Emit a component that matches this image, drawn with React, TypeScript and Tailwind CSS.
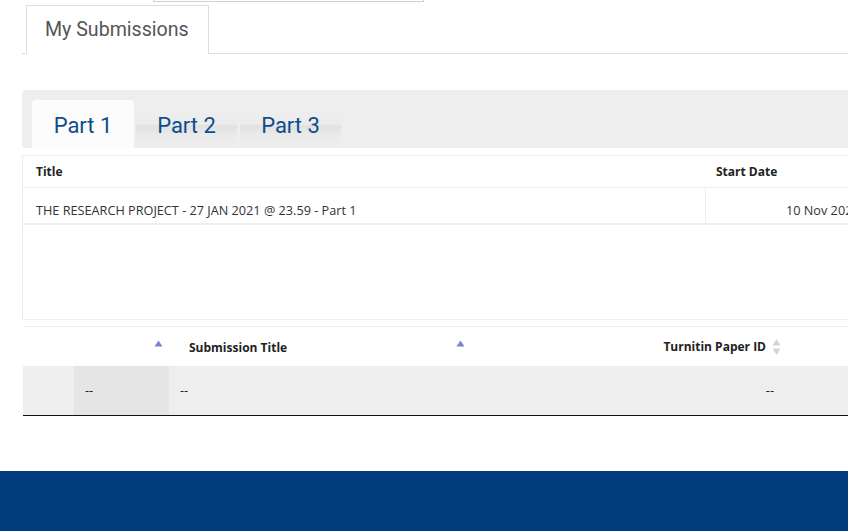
import React from "react";

function SortUp() {
  return (
    <svg width="9" height="7" viewBox="0 0 9 7" className="block">
      <path d="M4.5 0.5 L8.5 6.5 L0.5 6.5 Z" fill="#7b83d6" />
    </svg>
  );
}

function SortBoth() {
  return (
    <svg width="9" height="18" viewBox="0 0 9 18" className="block">
      <path d="M4.5 1 L8.5 7.5 L0.5 7.5 Z" fill="#d4d4d4" />
      <path d="M4.5 17 L8.5 10.5 L0.5 10.5 Z" fill="#d4d4d4" />
    </svg>
  );
}

const partTab =
  "w-[101px] h-[48px] flex items-center justify-center pt-[2px] text-[22px] text-[#0d4d8c] bg-[linear-gradient(to_bottom,#efefef_0%,#ececec_50%,#e1e1e1_54%,#e9e9e9_70%,#eeeeee_100%)] rounded-t-[4px]";

export default function App() {
  return (
    <div className="w-[848px] h-[531px] overflow-hidden bg-white flex flex-col font-['Open_Sans',sans-serif]">
      {/* scrolled-off box at top */}
      <div className="ml-[153px] w-[271px] h-[2px] border-x border-b border-[#d0d0d0]" />

      {/* page tabs */}
      <div className="mt-[3px] ml-[22px] pl-[4px] flex border-b border-[#dddddd] font-['Roboto',sans-serif]">
        <div className="-mb-px w-[183px] h-[49px] bg-white border border-b-0 border-[#dddddd] pl-[18px] pb-[1px] flex items-center text-[19.6px] text-[#555]">
          My Submissions
        </div>
      </div>

      {/* part tabs */}
      <div className="mt-[36px] ml-[22px] h-[58px] bg-[#eeeeee] rounded-l-[4px] pt-[10px] pl-[10px] flex font-['Roboto',sans-serif]">
        <div className="w-[102px] h-[48px] flex items-center justify-center pt-[2px] text-[22px] text-[#0d4d8c] bg-[#fcfcfc] rounded-t-[4px]">
          Part 1
        </div>
        <div className={`ml-[2px] ${partTab}`}>Part 2</div>
        <div className={`ml-[3px] ${partTab}`}>Part 3</div>
      </div>

      {/* assignment table */}
      <div className="mt-[7px] ml-[22px] w-[900px] h-[165px] border border-[#eeeeee] text-[12px] text-[#222]">
        <div className="h-[32px] flex items-center border-b border-[#eeeeee] font-bold">
          <div className="w-[682px] pl-[13px]">Title</div>
          <div className="pl-[11px]">Start Date</div>
        </div>
        <div className="h-[37px] flex border-b-2 border-[#eeeeee] text-[12.7px] text-[#333]">
          <div className="w-[682px] pl-[13px] pt-[13px]">THE RESEARCH PROJECT - 27 JAN 2021 @ 23.59 - Part 1</div>
          <div className="border-l border-[#eeeeee] pl-[80px] pt-[13px] whitespace-nowrap">10 Nov 2020</div>
        </div>
      </div>

      {/* submissions table */}
      <div className="mt-[6px] ml-[23px] w-[900px] border-t border-[#eeeeee] text-[12px] text-[#222]">
        <div className="h-[39px] flex bg-white font-bold">
          <div className="w-[51px]" />
          <div className="w-[95px] flex justify-end pr-[6px] pt-[13px]">
            <SortUp />
          </div>
          <div className="w-[301px] flex justify-between pl-[20px] pr-[5px]">
            <span className="pt-[12px]">Submission Title</span>
            <span className="pt-[13px]"><SortUp /></span>
          </div>
          <div className="w-[311px] flex justify-end items-center gap-[6px]">
            <span>Turnitin Paper ID</span>
            <SortBoth />
          </div>
        </div>
        <div className="h-[50px] flex bg-[#eeeeee] border-b border-[#111] text-[12.7px]">
          <div className="w-[51px]" />
          <div className="w-[95px] bg-[#e5e5e5] pl-[11px] flex items-center">--</div>
          <div className="w-[301px] pl-[11px] flex items-center">--</div>
          <div className="w-[304px] flex items-center justify-end">--</div>
        </div>
      </div>

      {/* footer */}
      <div className="mt-[55px] h-[60px] shrink-0 bg-[#013d7c]" />
    </div>
  );
}
